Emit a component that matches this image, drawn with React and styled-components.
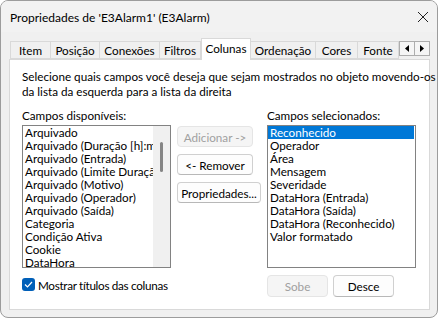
import React from "react";
import styled, { createGlobalStyle } from "styled-components";

const FONT = `Lato, "Noto Sans", sans-serif`;

const Global = createGlobalStyle`
  html, body { margin: 0; padding: 0; background: #ffffff; }
  body { font-family: ${FONT}; font-size: 11.7px; color: #000; }
  * { box-sizing: border-box; }
`;

const Window = styled.div`
  width: 438px;
  height: 318px;
  border: 1px solid #9c9c9c;
  border-radius: 8px;
  background: #f0f0f0;
  display: flex;
  flex-direction: column;
  overflow: hidden;
`;

const TitleBar = styled.div`
  height: 31px;
  display: flex;
  align-items: center;
  justify-content: space-between;
  padding: 0 8px 0 9px;
  background: #f2f2f2;
`;

const Title = styled.span`
  font-size: 12px;
  padding-top: 1px;
`;

const Body = styled.div`
  flex: 1;
  display: flex;
  flex-direction: column;
  padding: 6px 7px 7px 8px;
`;

const TabsRow = styled.div`
  display: flex;
  align-items: flex-end;
  height: 21px;
  position: relative;
  z-index: 1;
`;

const Tab = styled.div`
  width: ${(p) => p.$w}px;
  height: ${(p) => (p.$active ? 22 : 18)}px;
  margin-bottom: ${(p) => (p.$active ? -1 : 0)}px;
  margin-left: ${(p) => (p.$first ? 1 : 0)}px;
  background: ${(p) => (p.$active ? "#ffffff" : "#f0f0f0")};
  border: 1px solid #d9d9d9;
  border-bottom: ${(p) => (p.$active ? "none" : "1px solid #d9d9d9")};
  border-left: ${(p) => (p.$first || p.$active ? "1px solid #d9d9d9" : "none")};
  display: flex;
  align-items: center;
  justify-content: center;
  padding-bottom: ${(p) => (p.$active ? 4 : 0)}px;
  white-space: nowrap;
`;

const Arrows = styled.div`
  display: flex;
  align-self: flex-start;
  margin-top: 3px;
`;

const ArrowBtn = styled.div`
  width: 16px;
  height: 15px;
  background: #f5f5f5;
  border: 1px solid #adadad;
  margin-left: ${(p) => (p.$second ? -1 : 0)}px;
  display: flex;
  align-items: center;
  justify-content: center;
`;

const Panel = styled.div`
  flex: 1;
  background: #ffffff;
  border: 1px solid #d9d9d9;
  padding: 9px 13px 0 12px;
  display: flex;
  flex-direction: column;
`;

const Description = styled.p`
  margin: 0;
  line-height: 15px;
  white-space: nowrap;
`;

const Grid = styled.div`
  margin-top: 9px;
  display: grid;
  grid-template-columns: 149px 84px 149px;
  column-gap: 6px;
  grid-template-rows: 15px 143px auto;
  row-gap: 2px;
`;

const Label = styled.div`
  line-height: 15px;
  white-space: nowrap;
  grid-column: ${(p) => p.$col};
`;

const ListBox = styled.div`
  border: 1px solid #828282;
  background: #ffffff;
  display: flex;
  overflow: hidden;
  height: 143px;
`;

const Items = styled.div`
  flex: 1;
  min-width: 0;
  padding-right: ${(p) => (p.$inset ? 1 : 0)}px;
`;

const Item = styled.div`
  height: 13px;
  line-height: 13px;
  padding-left: 2px;
  white-space: nowrap;
  overflow: hidden;
  background: ${(p) => (p.$selected ? "#0078d7" : "transparent")};
  color: ${(p) => (p.$selected ? "#ffffff" : "#000000")};
`;

const ScrollTrack = styled.div`
  width: 17px;
  flex: none;
  background: #f0f0f0;
  display: flex;
  justify-content: center;
  padding-top: 16px;
`;

const Thumb = styled.div`
  width: 3px;
  height: 30px;
  border-radius: 2px;
  background: #858585;
`;

const ButtonCol = styled.div`
  display: flex;
  flex-direction: column;
  align-items: flex-start;
  gap: 7px;
  padding-top: 1px;
`;

const Button = styled.div`
  width: ${(p) => p.$w}px;
  height: ${(p) => p.$h || 21}px;
  border: 1px solid ${(p) => (p.$disabled ? "#e5e5e5" : "#d0d0d0")};
  border-bottom-color: ${(p) => (p.$disabled ? "#e5e5e5" : "#b8b8b8")};
  border-radius: 4px;
  background: ${(p) => (p.$disabled ? "#f5f5f5" : "#fdfdfd")};
  color: ${(p) => (p.$disabled ? "#a0a0a0" : "#000000")};
  display: flex;
  align-items: center;
  justify-content: center;
  white-space: nowrap;
`;

const BottomLeft = styled.div`
  grid-column: 1 / 3;
  display: flex;
  align-items: center;
  gap: 3px;
  padding-top: 4px;
  height: 25px;
  align-self: flex-start;
`;

const CheckLabel = styled.span`
  letter-spacing: -0.3px;
`;

const Check = styled.div`
  width: 13px;
  height: 13px;
  border-radius: 3px;
  background: #005fb8;
  display: flex;
  align-items: center;
  justify-content: center;
`;

const BottomRight = styled.div`
  grid-column: 3;
  display: flex;
  gap: 5px;
  padding-top: 5px;
`;

const left = [
  "Arquivado",
  "Arquivado (Duração [h]:mm:ss)",
  "Arquivado (Entrada)",
  "Arquivado (Limite Duração)",
  "Arquivado (Motivo)",
  "Arquivado (Operador)",
  "Arquivado (Saída)",
  "Categoria",
  "Condição Ativa",
  "Cookie",
  "DataHora",
];

const right = [
  "Reconhecido",
  "Operador",
  "Área",
  "Mensagem",
  "Severidade",
  "DataHora (Entrada)",
  "DataHora (Saída)",
  "DataHora (Reconhecido)",
  "Valor formatado",
];

const tabs = [
  ["Item", 41],
  ["Posição", 49],
  ["Conexões", 60],
  ["Filtros", 41],
  ["Colunas", 50],
  ["Ordenação", 65],
  ["Cores", 42],
  ["Fonte", 41],
];

export default function App() {
  return (
    <>
      <Global />
      <Window>
        <TitleBar>
          <Title>Propriedades de 'E3Alarm1' (E3Alarm)</Title>
          <svg width="12" height="12" viewBox="0 0 12 12">
            <path d="M1 1 L11 11 M11 1 L1 11" stroke="#222" strokeWidth="1" />
          </svg>
        </TitleBar>
        <Body>
          <TabsRow>
            {tabs.map(([t, w], i) => (
              <Tab key={t} $w={w} $first={i === 0} $active={t === "Colunas"}>
                {t}
              </Tab>
            ))}
            <Arrows>
              <ArrowBtn>
                <svg width="4" height="7" viewBox="0 0 4 7">
                  <path d="M4 0 L0 3.5 L4 7 Z" fill="#000" />
                </svg>
              </ArrowBtn>
              <ArrowBtn $second>
                <svg width="4" height="7" viewBox="0 0 4 7">
                  <path d="M0 0 L4 3.5 L0 7 Z" fill="#000" />
                </svg>
              </ArrowBtn>
            </Arrows>
          </TabsRow>
          <Panel>
            <Description>
              Selecione quais campos você deseja que sejam mostrados no objeto movendo-os
              <br />
              da lista da esquerda para a lista da direita
            </Description>
            <Grid>
              <Label $col={1}>Campos disponíveis:</Label>
              <Label $col={3}>Campos selecionados:</Label>
              <ListBox>
                <Items>
                  {left.map((t) => (
                    <Item key={t}>{t}</Item>
                  ))}
                </Items>
                <ScrollTrack>
                  <Thumb />
                </ScrollTrack>
              </ListBox>
              <ButtonCol>
                <Button $w={76} $disabled>Adicionar -&gt;</Button>
                <Button $w={76}>&lt;- Remover</Button>
                <Button $w={84}>Propriedades...</Button>
              </ButtonCol>
              <ListBox>
                <Items $inset>
                  {right.map((t, i) => (
                    <Item key={t} $selected={i === 0}>{t}</Item>
                  ))}
                </Items>
              </ListBox>
              <BottomLeft>
                <Check>
                  <svg width="9" height="7" viewBox="0 0 9 7">
                    <path d="M1 3.5 L3.5 6 L8 1" stroke="#fff" strokeWidth="1.2" fill="none" />
                  </svg>
                </Check>
                <CheckLabel>Mostrar títulos das colunas</CheckLabel>
              </BottomLeft>
              <BottomRight>
                <Button $w={61} $h={22} $disabled>Sobe</Button>
                <Button $w={61} $h={22}>Desce</Button>
              </BottomRight>
            </Grid>
          </Panel>
        </Body>
      </Window>
    </>
  );
}
